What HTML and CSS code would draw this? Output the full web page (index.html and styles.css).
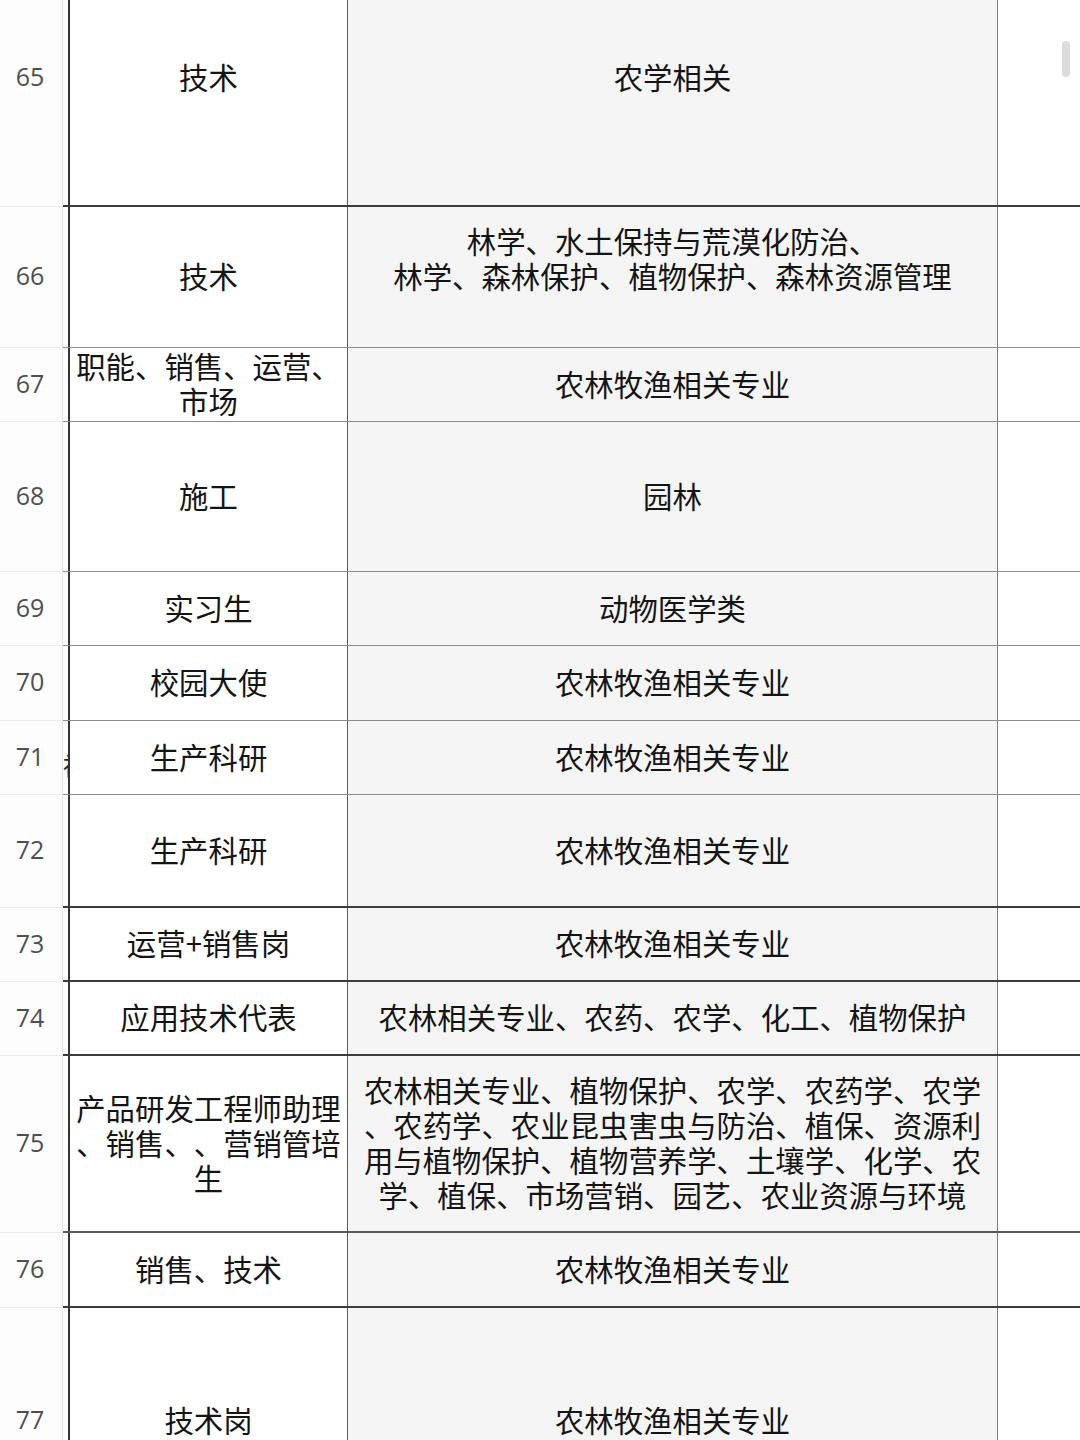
FILE: index.html
```html
<!DOCTYPE html>
<html lang="zh-CN">
<head>
<meta charset="utf-8">
<title>岗位表</title>
<link rel="stylesheet" href="styles.css">
</head>
<body>
<div class="sheet">
  <div class="row h257 thick">
    <div class="num">65</div>
    <div class="rest"><div class="gap"></div><div class="c2"><div class="txt">技术</div></div><div class="c3"><div class="txt">农学相关</div></div><div class="c4"></div></div>
  </div>
  <div class="row h141">
    <div class="num">66</div>
    <div class="rest"><div class="gap"></div><div class="c2"><div class="txt">技术</div></div><div class="c3"><div class="txt">林学、水土保持与荒漠化防治、<br>林学、森林保护、植物保护、森林资源管理<br>&nbsp;</div></div><div class="c4"></div></div>
  </div>
  <div class="row h74">
    <div class="num">67</div>
    <div class="rest"><div class="gap"></div><div class="c2"><div class="txt">职能、销售、运营、<br>市场</div></div><div class="c3"><div class="txt">农林牧渔相关专业</div></div><div class="c4"></div></div>
  </div>
  <div class="row h150">
    <div class="num">68</div>
    <div class="rest"><div class="gap"></div><div class="c2"><div class="txt">施工</div></div><div class="c3"><div class="txt">园林</div></div><div class="c4"></div></div>
  </div>
  <div class="row h74">
    <div class="num">69</div>
    <div class="rest"><div class="gap"></div><div class="c2"><div class="txt">实习生</div></div><div class="c3"><div class="txt">动物医学类</div></div><div class="c4"></div></div>
  </div>
  <div class="row h75">
    <div class="num">70</div>
    <div class="rest"><div class="gap"></div><div class="c2"><div class="txt">校园大使</div></div><div class="c3"><div class="txt">农林牧渔相关专业</div></div><div class="c4"></div></div>
  </div>
  <div class="row h74">
    <div class="num">71</div>
    <div class="rest"><div class="gap stray"><span class="frag">神</span></div><div class="c2"><div class="txt">生产科研</div></div><div class="c3"><div class="txt">农林牧渔相关专业</div></div><div class="c4"></div></div>
  </div>
  <div class="row h113 thick">
    <div class="num">72</div>
    <div class="rest"><div class="gap"></div><div class="c2"><div class="txt">生产科研</div></div><div class="c3"><div class="txt">农林牧渔相关专业</div></div><div class="c4"></div></div>
  </div>
  <div class="row h74 thick">
    <div class="num">73</div>
    <div class="rest"><div class="gap"></div><div class="c2"><div class="txt">运营+销售岗</div></div><div class="c3"><div class="txt">农林牧渔相关专业</div></div><div class="c4"></div></div>
  </div>
  <div class="row h74 thick">
    <div class="num">74</div>
    <div class="rest"><div class="gap"></div><div class="c2"><div class="txt">应用技术代表</div></div><div class="c3"><div class="txt">农林相关专业、农药、农学、化工、植物保护</div></div><div class="c4"></div></div>
  </div>
  <div class="row h177 mid">
    <div class="num">75</div>
    <div class="rest"><div class="gap"></div><div class="c2"><div class="txt">产品研发工程师助理<br>、销售、、营销管培<br>生</div></div><div class="c3"><div class="txt">农林相关专业、植物保护、农学、农药学、农学<br>、农药学、农业昆虫害虫与防治、植保、资源利<br>用与植物保护、植物营养学、土壤学、化学、农<br>学、植保、市场营销、园艺、农业资源与环境</div></div><div class="c4"></div></div>
  </div>
  <div class="row h75 thick">
    <div class="num">76</div>
    <div class="rest"><div class="gap"></div><div class="c2"><div class="txt">销售、技术</div></div><div class="c3"><div class="txt">农林牧渔相关专业</div></div><div class="c4"></div></div>
  </div>
  <div class="row h227">
    <div class="num">77</div>
    <div class="rest"><div class="gap"></div><div class="c2"><div class="txt">技术岗</div></div><div class="c3"><div class="txt">农林牧渔相关专业</div></div><div class="c4"></div></div>
  </div>
</div>
<div class="scroll-thumb"></div>
</body>
</html>
```

FILE: styles.css
```css
* { box-sizing: border-box; }

html, body {
  margin: 0;
  padding: 0;
  background: #ffffff;
  height: 1440px;
  overflow: hidden;
}

body {
  font-family: "Noto Sans CJK SC", "Noto Sans", sans-serif;
  font-size: 29.4px;
  line-height: 35px;
  color: #141414;
  text-spacing-trim: space-all;
  font-feature-settings: "chws" 0, "halt" 0, "palt" 0;
}

.sheet {
  margin-top: -50px;
  width: 1080px;
}

.row {
  display: flex;
  align-items: stretch;
}

.h74 { height: 74px; }
.h75 { height: 75px; }
.h113 { height: 113px; }
.h141 { height: 141px; }
.h150 { height: 150px; }
.h177 { height: 177px; }
.h227 { height: 227px; }
.h257 { height: 257px; }

.num {
  width: 63px;
  flex: 0 0 63px;
  border-right: 1px solid #e3e3e3;
  border-bottom: 1px solid #ececec;
  display: flex;
  align-items: center;
  justify-content: center;
  padding-right: 2px;
  padding-bottom: 3px;
  font-family: "Open Sans", "Roboto", sans-serif;
  font-size: 25px;
  color: #4d4f52;
  background: #fdfdfd;
}

.rest {
  flex: 1;
  display: flex;
  border-bottom: 1px solid #8c8c8c;
}

.row.thick .rest { border-bottom: 2px solid #3c3c3c; }
.row.mid .rest { border-bottom: 2px solid #5a5a5a; }

.gap {
  width: 5px;
  flex: 0 0 5px;
}

.stray {
  overflow: hidden;
  display: flex;
  align-items: center;
  padding-top: 14px;
}

.frag {
  font-size: 24px;
  line-height: 24px;
  color: #222;
  white-space: nowrap;
}

.c2, .c3 {
  display: flex;
  align-items: center;
  justify-content: center;
  padding-bottom: 3px;
}

.txt {
  text-align: center;
  white-space: nowrap;
}

.c2 {
  width: 279px;
  flex: 0 0 279px;
  border-left: 2px solid #333333;
  background: #ffffff;
}

.c3 {
  width: 650px;
  flex: 0 0 650px;
  border-left: 1px solid #5c5c5c;
  background: #f5f5f5;
}

.c4 {
  flex: 1;
  border-left: 1px solid #7a7a7a;
  background: #ffffff;
}

.scroll-thumb {
  position: absolute;
  top: 41px;
  left: 1062px;
  width: 8px;
  height: 36px;
  border-radius: 4px;
  background: #dcdcdc;
}
```
